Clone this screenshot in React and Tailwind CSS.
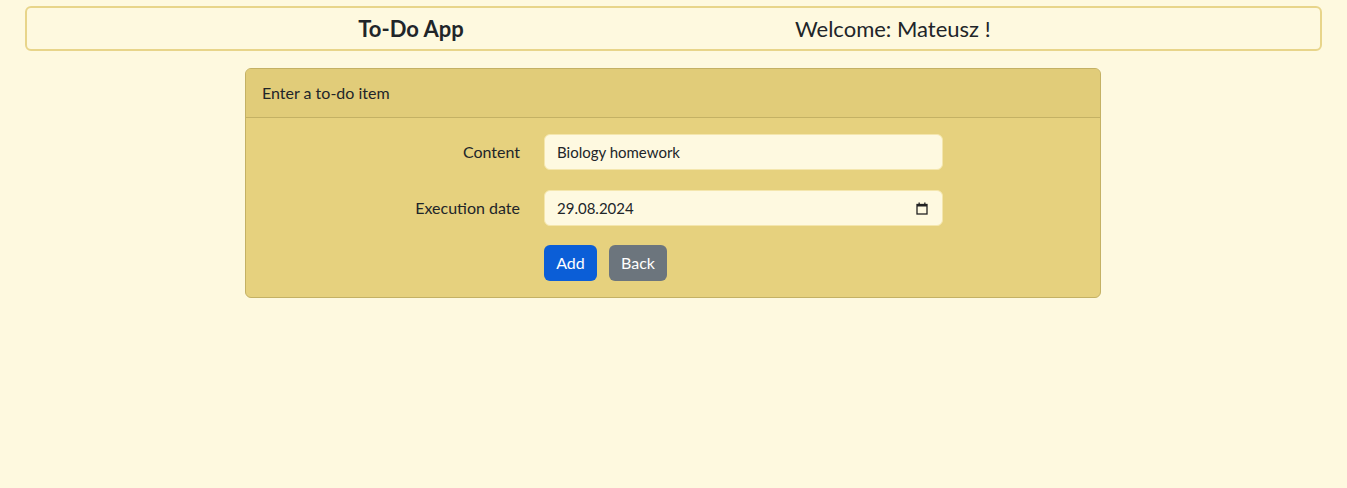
import React from "react";

export default function App() {
  const font = { fontFamily: "Lato, 'Noto Sans', 'Liberation Sans', sans-serif" };
  return (
    <div className="min-h-[488px] bg-[#fef9df] text-[#212529] pt-[6px]" style={font}>
      <div className="mx-[25px] h-[45px] border-2 border-[#e8d58a] rounded-[6px] flex items-center">
        <div className="w-[768px] text-center text-[22px] font-bold leading-none">To-Do App</div>
        <div className="text-[22px] leading-none">Welcome: Mateusz !</div>
      </div>
      <div className="ml-[245px] mt-[17px] w-[856px] border border-[#c4b164] rounded-[6px] overflow-hidden bg-[#e6d17e]">
        <div className="h-[49px] bg-[#e1cc79] border-b border-[#c4b164] flex items-center px-[16px] text-[16px]">
          Enter a to-do item
        </div>
        <div className="pt-[16px] pb-[16px] px-[16px] flex flex-col">
          <div className="flex items-center">
            <div className="w-[258px] text-right text-[16px]">Content</div>
            <div className="ml-[24px] w-[399px] h-[36px] rounded-[6px] bg-[#fef9e0] border border-[#f4e6ad] flex items-center px-[12px] text-[15px]">
              Biology homework
            </div>
          </div>
          <div className="flex items-center mt-[20px]">
            <div className="w-[258px] text-right text-[16px]">Execution date</div>
            <div className="ml-[24px] w-[399px] h-[36px] rounded-[6px] bg-[#fef9e0] border border-[#f4e6ad] flex items-center justify-between pl-[12px] pr-[14px] text-[15px]">
              <span>29.08.2024</span>
              <svg width="12" height="13" viewBox="0 0 12 13">
                <rect x="1" y="2.5" width="10" height="9.5" fill="none" stroke="#222" strokeWidth="1.3" />
                <rect x="1" y="2" width="10" height="2.5" fill="#222" />
                <rect x="2.5" y="0.5" width="1.3" height="2" fill="#222" />
                <rect x="8.2" y="0.5" width="1.3" height="2" fill="#222" />
              </svg>
            </div>
          </div>
          <div className="flex items-center mt-[19px] ml-[282px] gap-[12px]">
            <div className="w-[53px] h-[36px] rounded-[6px] bg-[#0b5ed7] text-white text-[16px] flex items-center justify-center">Add</div>
            <div className="w-[58px] h-[36px] rounded-[6px] bg-[#6c757d] text-white text-[16px] flex items-center justify-center">Back</div>
          </div>
        </div>
      </div>
    </div>
  );
}
